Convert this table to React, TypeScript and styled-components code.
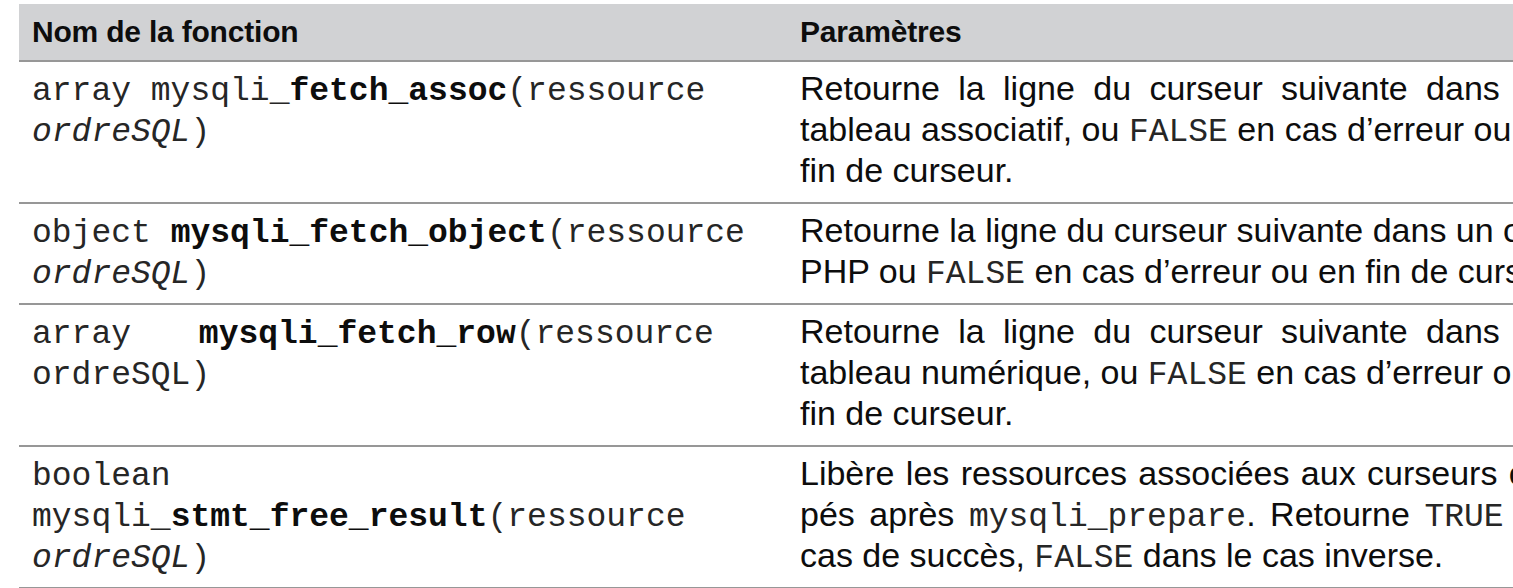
import React from 'react'
import styled, { createGlobalStyle } from 'styled-components'

const GlobalStyle = createGlobalStyle`
    html, body {
        margin: 0;
        padding: 0;
        background: #fff;
        overflow: hidden;
    }
    body {
        width: 1513px;
        height: 588px;
        color: #0d0d0d;
        font-family: 'Liberation Sans', Arial, sans-serif;
    }
`

type Part = { text: string; bold?: boolean; italic?: boolean }
type Sig = { parts: Part[]; spread?: number }[]
// justify: stretched to the column; otherwise the line keeps its natural width
type Desc = { parts: (string | { code: string })[]; justify?: boolean }[]

const rows: { sig: Sig; desc: Desc }[] = [
    {
        sig: [
            { parts: [{ text: 'array mysqli_' }, { text: 'fetch_assoc', bold: true }, { text: '(ressource' }] },
            { parts: [{ text: 'ordreSQL', italic: true }, { text: ')' }] },
        ],
        desc: [
            { parts: ['Retourne la ligne du curseur suivante dans un'], justify: true },
            { parts: ['tableau associatif, ou ', { code: 'FALSE' }, ' en cas d’erreur ou en'] },
            { parts: ['fin de curseur.'] },
        ],
    },
    {
        sig: [
            { parts: [{ text: 'object ' }, { text: 'mysqli_fetch_object', bold: true }, { text: '(ressource' }] },
            { parts: [{ text: 'ordreSQL', italic: true }, { text: ')' }] },
        ],
        desc: [
            { parts: ['Retourne la ligne du curseur suivante dans un objet'] },
            { parts: ['PHP ou ', { code: 'FALSE' }, ' en cas d’erreur ou en fin de curseur.'] },
        ],
    },
    {
        sig: [
            { parts: [{ text: 'array ' }, { text: 'mysqli_fetch_row', bold: true }, { text: '(ressource' }], spread: 48 },
            { parts: [{ text: 'ordreSQL)' }] },
        ],
        desc: [
            { parts: ['Retourne la ligne du curseur suivante dans un'], justify: true },
            { parts: ['tableau numérique, ou ', { code: 'FALSE' }, ' en cas d’erreur ou en'] },
            { parts: ['fin de curseur.'] },
        ],
    },
    {
        sig: [
            { parts: [{ text: 'boolean' }] },
            { parts: [{ text: 'mysqli_' }, { text: 'stmt_free_result', bold: true }, { text: '(ressource' }] },
            { parts: [{ text: 'ordreSQL', italic: true }, { text: ')' }] },
        ],
        desc: [
            { parts: ['Libère les ressources associées aux curseurs oc-'], justify: true },
            { parts: ['pés après ', { code: 'mysqli_prepare' }, '. Retourne ', { code: 'TRUE' }, ' en'], justify: true },
            { parts: ['cas de succès, ', { code: 'FALSE' }, ' dans le cas inverse.'] },
        ],
    },
]

export default function App() {
    return (
        <>
            <GlobalStyle />
            <Table>
                <HeadRow>
                    <HeadCell $first>Nom de la fonction</HeadCell>
                    <HeadCell>Paramètres</HeadCell>
                </HeadRow>
                {rows.map((row, i) => (
                    <BodyRow key={i}>
                        <SigCell>
                            {row.sig.map((line, j) => (
                                <SigLine key={j} $spread={line.spread}>
                                    {line.parts.map((p, k) => (
                                        <Token key={k} $bold={p.bold} $italic={p.italic}>{p.text}</Token>
                                    ))}
                                </SigLine>
                            ))}
                        </SigCell>
                        <DescCell>
                            {row.desc.map((line, j) => (
                                <DescLine key={j} $justify={line.justify}>
                                    {line.parts.map((p, k) =>
                                        typeof p === 'string' ? p : <Code key={k}>{p.code}</Code>
                                    )}
                                </DescLine>
                            ))}
                        </DescCell>
                    </BodyRow>
                ))}
            </Table>
        </>
    )
}

const Table = styled.div`
    margin: 4px 0 0 19px;
    width: 1580px;
    display: flex;
    flex-direction: column;
`

const HeadRow = styled.div`
    display: grid;
    grid-template-columns: 781px 1fr;
    height: 56px;
    background: #d1d2d4;
    border-bottom: 2px solid #979797;
`

const HeadCell = styled.div<{ $first?: boolean }>`
    padding-left: ${(p) => (p.$first ? '13px' : '0')};
    font-family: 'Liberation Sans', Arial, sans-serif;
    font-weight: 700;
    font-size: 30px;
    line-height: 56px;
    letter-spacing: -0.2px;
`

const BodyRow = styled.div`
    display: grid;
    grid-template-columns: 781px 756px;
    border-bottom: 2px solid #979797;
`

const SigCell = styled.div`
    padding: 9px 0 8px 13px;
`

const SigLine = styled.div<{ $spread?: number }>`
    font-family: 'Liberation Mono', 'Courier New', monospace;
    font-size: 33px;
    line-height: 41px;
    white-space: pre;
    color: #262626;
    word-spacing: ${(p) => (p.$spread ? `${p.$spread}px` : 'normal')};
`

const Token = styled.span<{ $bold?: boolean; $italic?: boolean }>`
    font-weight: ${(p) => (p.$bold ? 700 : 400)};
    font-style: ${(p) => (p.$italic ? 'italic' : 'normal')};
    color: ${(p) => (p.$bold ? '#0d0d0d' : 'inherit')};
`

const DescCell = styled.div`
    padding: 6px 0 11px 0;
`

const DescLine = styled.div<{ $justify?: boolean }>`
    font-family: 'Liberation Sans', Arial, sans-serif;
    font-size: 34px;
    line-height: 41px;
    white-space: ${(p) => (p.$justify ? 'normal' : 'nowrap')};
    text-align: ${(p) => (p.$justify ? 'justify' : 'left')};
    text-align-last: ${(p) => (p.$justify ? 'justify' : 'left')};
`

const Code = styled.code`
    font-family: 'Liberation Mono', 'Courier New', monospace;
    font-size: 33px;
    line-height: 1;
    color: #262626;
`
